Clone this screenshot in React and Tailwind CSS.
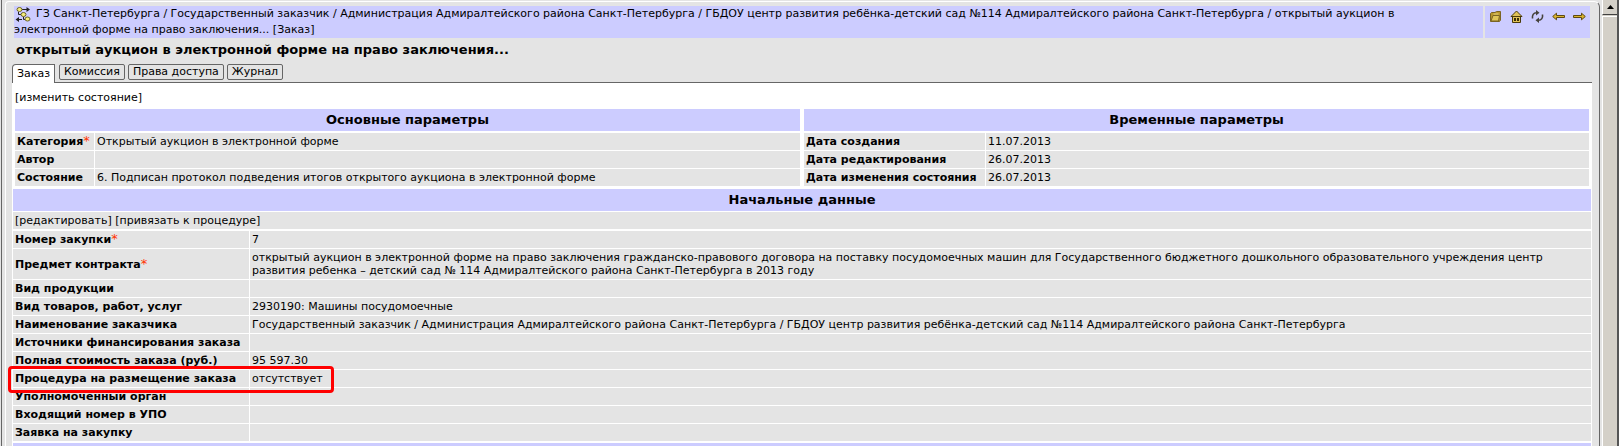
import React from 'react';

const tabs = ['Комиссия', 'Права доступа', 'Журнал'];

const mainParams = [
    { label: 'Категория', required: true, value: 'Открытый аукцион в электронной форме' },
    { label: 'Автор', value: '' },
    { label: 'Состояние', value: '6. Подписан протокол подведения итогов открытого аукциона в электронной форме' },
];

const timeParams = [
    { label: 'Дата создания', value: '11.07.2013' },
    { label: 'Дата редактирования', value: '26.07.2013' },
    { label: 'Дата изменения состояния', value: '26.07.2013' },
];

const initialData = [
    { label: 'Номер закупки', required: true, value: '7' },
    {
        label: 'Предмет контракта',
        required: true,
        value: 'открытый аукцион в электронной форме на право заключения гражданско-правового договора на поставку посудомоечных машин для Государственного бюджетного дошкольного образовательного учреждения центр развития ребенка – детский сад № 114 Адмиралтейского района Санкт-Петербурга в 2013 году',
    },
    { label: 'Вид продукции', value: '' },
    { label: 'Вид товаров, работ, услуг', value: '2930190: Машины посудомоечные' },
    {
        label: 'Наименование заказчика',
        value: 'Государственный заказчик / Администрация Адмиралтейского района Санкт-Петербурга / ГБДОУ центр развития ребёнка-детский сад №114 Адмиралтейского района Санкт-Петербурга',
    },
    { label: 'Источники финансирования заказа', value: '' },
    { label: 'Полная стоимость заказа (руб.)', value: '95 597.30' },
    { label: 'Процедура на размещение заказа', value: 'отсутствует', marked: true },
    { label: 'Уполномоченный орган', value: '' },
    { label: 'Входящий номер в УПО', value: '' },
    { label: 'Заявка на закупку', value: '' },
];

const TreeIcon = () => (
    <svg width="17" height="16" viewBox="0 0 17 16" className="mr-[5px] inline-block align-middle" fill="none" stroke="#222">
        <path d="M8 3.5H13M4.5 6V8.5H7M9.5 11V13.5H11M4 13.5H8" />
        <path d="M12.5 1V6L16 3.5ZM5 11V16L1.5 13.5Z" fill="#222" stroke="none" />
        <ellipse cx="5.5" cy="3.5" rx="2.5" ry="2" fill="#f5ee7a" stroke="#6b6224" />
        <ellipse cx="9.5" cy="8.5" rx="2.5" ry="2" fill="#f5ee7a" stroke="#6b6224" />
        <ellipse cx="13.5" cy="13" rx="2.5" ry="2" fill="#f5ee7a" stroke="#6b6224" />
    </svg>
);

const FolderIcon = () => (
    <svg width="13" height="13" viewBox="0 0 13 13" fill="#b8962c" stroke="#7a6424">
        <path d="M1.5 11.5V3.5L2.5 2.5H6L7.5 1.5H11.5V10L10.5 11.5Z" />
        <path d="M2 11L4 5.5H10.5L9.5 11Z" fill="#e0c658" />
        <path d="M4.5 4H9.5" stroke="#e8d47c" />
    </svg>
);

const HomeIcon = () => (
    <svg width="13" height="13" viewBox="0 0 13 13" fill="#e0c258" stroke="#4a3a0a">
        <path d="M2.5 6.5H10.5V12.5H2.5Z" />
        <path d="M1 6.5L6.5 1L12 6.5Z" />
        <path d="M4 8H6V11H4ZM7 8H9V11H7Z" fill="#3a2e08" stroke="none" />
    </svg>
);

const RefreshIcon = () => (
    <svg width="13" height="13" viewBox="0 0 13 13" fill="none" stroke="#46423c" strokeWidth="1.6">
        <path d="M1.5 8.5C1 5 2.5 2.8 5.5 2.8M11.5 4.5C12 8 10.5 10.2 7.5 10.2" />
        <path d="M5 0L8.5 2.8L5 5.6ZM8 7.4L4.5 10.2L8 13Z" fill="#46423c" stroke="none" />
    </svg>
);

const ArrowIcon = ({ right }) => (
    <svg width="13" height="13" viewBox="0 0 13 13" fill="#dcb42c" stroke="#5e4a10">
        {right
            ? <path d="M0.5 5.5H8.5V3.2L12.3 6.5L8.5 9.8V7.5H0.5Z" />
            : <path d="M12.5 5.5H4.5V3.2L0.7 6.5L4.5 9.8V7.5H12.5Z" />}
    </svg>
);

const toolbar = [
    { title: 'Папка', icon: <FolderIcon /> },
    { title: 'Домой', icon: <HomeIcon /> },
    { title: 'Обновить', icon: <RefreshIcon /> },
    { title: 'Назад', icon: <ArrowIcon /> },
    { title: 'Вперёд', icon: <ArrowIcon right /> },
];

const SectionTitle = ({ children }) => (
    <h2 className="bg-[#ccccff] py-1 text-center text-[13px] leading-[14px] font-bold">{children}</h2>
);

const ParamTable = ({ rows, labelWidth }) => (
    <table className="w-full border-separate border-spacing-px">
        <tbody>
            {rows.map((row) => (
                <tr key={row.label} className="h-[17px]">
                    <th className={`relative bg-[#e4e4e4] px-[2px] py-[2px] text-left font-bold whitespace-nowrap ${labelWidth}`}>
                        {row.label}
                        {row.required && <span className="text-[13px] leading-0 font-normal text-[#ff3300]">*</span>}
                        {row.marked && (
                            <span className="pointer-events-none absolute -top-1 -left-[5px] z-10 h-[27px] w-[326px] rounded-sm border-3 border-[#ff0000]" />
                        )}
                    </th>
                    <td className="bg-[#e4e4e4] px-[2px] py-[2px]">{row.value}</td>
                </tr>
            ))}
        </tbody>
    </table>
);

const App = () => (
    <div className="flex h-screen overflow-hidden bg-[#e4e4e4] font-['Verdana','DejaVu_Sans',sans-serif] text-[11px] leading-[13px] text-black">
        <div className="w-[2px] shrink-0 border-r border-[#666]" />
        <div className="mt-px ml-[3px] min-w-0 flex-1 rounded-tl-sm rounded-tr-md border-t border-r border-l border-t-white border-r-[#666] border-l-white pt-1 pr-[7px] pl-[6px]">
            <header className="mx-[2px] flex gap-[2px]">
                <div className="flex-1 bg-[#ccccff] pr-6 leading-4">
                    <TreeIcon />
                    <a href="#gz">ГЗ Санкт-Петербурга</a> / <a href="#customer">Государственный заказчик</a> / <a href="#admin">Администрация Адмиралтейского района Санкт-Петербурга</a> / <a href="#gbdou">ГБДОУ центр развития ребёнка-детский сад №114 Адмиралтейского района Санкт-Петербурга</a> / <a href="#order">открытый аукцион в электронной форме на право заключения...</a> [Заказ]
                </div>
                <div className="flex shrink-0 items-start gap-2 bg-[#ccccff] px-1 pt-1">
                    {toolbar.map((item) => (
                        <button key={item.title} type="button" aria-label={item.title}>
                            {item.icon}
                        </button>
                    ))}
                </div>
            </header>

            <h1 className="px-1 pt-[3px] pb-px text-[13px] leading-[18px] font-bold">
                открытый аукцион в электронной форме на право заключения...
            </h1>

            <nav className="mt-1 flex items-start">
                <button type="button" className="h-[19px] rounded-tl-sm border-t border-r border-l border-[#666] bg-white px-1 pb-[2px]">
                    Заказ
                </button>
                <div className="flex h-[19px] flex-1 items-start gap-[3px] border-b border-[#666] pl-[4px]">
                    {tabs.map((tab) => (
                        <button key={tab} type="button" className="h-4 rounded-xs border border-[#666] px-1 leading-[14px]">
                            {tab}
                        </button>
                    ))}
                </div>
            </nav>

            <main className="bg-white pb-2">
                <div className="px-[3px] pt-2 pb-1">
                    <a href="#state">[изменить состояние]</a>
                </div>
                <div className="grid grid-cols-2 gap-[2px] px-[2px] pt-px">
                    <section>
                        <div className="mx-px mb-px"><SectionTitle>Основные параметры</SectionTitle></div>
                        <ParamTable rows={mainParams} labelWidth="w-[79px]" />
                    </section>
                    <section>
                        <div className="mx-px mb-px"><SectionTitle>Временные параметры</SectionTitle></div>
                        <ParamTable rows={timeParams} labelWidth="w-[181px]" />
                    </section>
                </div>
                <section className="mt-[2px]">
                    <div className="mx-px mb-px">
                        <SectionTitle>Начальные данные</SectionTitle>
                        <div className="mt-px bg-[#e4e4e4] px-[2px] py-[2px]">
                            <a href="#edit">[редактировать]</a> <a href="#bind">[привязать к процедуре]</a>
                        </div>
                    </div>
                    <ParamTable rows={initialData} labelWidth="w-[236px]" />
                </section>
                <div className="mx-px mt-px h-6 bg-[#ccccff]" />
            </main>
        </div>

        <div className="ml-[2px] flex w-[17px] shrink-0 flex-col border-r-2 border-[#555] bg-[#d4d0c8]">
            <button type="button" aria-label="Вверх" className="flex h-[15px] items-center justify-center border-b border-l border-b-[#404040] border-l-white">
                <svg width="7" height="4" viewBox="0 0 7 4"><path d="M3.5 0L7 4H0Z" /></svg>
            </button>
            <div className="mt-px flex-1 border-t border-l border-white" />
        </div>
    </div>
);

export default App;
